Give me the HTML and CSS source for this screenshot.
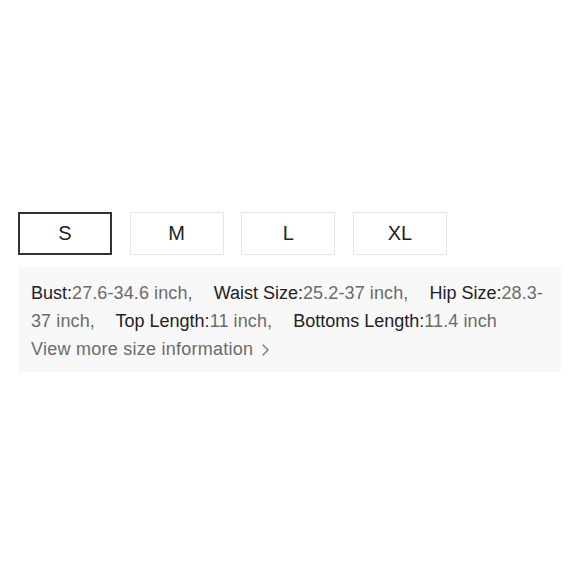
FILE: index.html
```html
<!DOCTYPE html>
<html>
<head>
<meta charset="utf-8">
<link rel="stylesheet" href="styles.css">
</head>
<body>
<div class="page">
  <div class="sizes">
    <div class="size active">S</div>
    <div class="size">M</div>
    <div class="size">L</div>
    <div class="size">XL</div>
  </div>
  <div class="info">
    <p class="specs"><span class="item"><span class="label">Bust:</span><span class="value">27.6-34.6 inch,</span></span> <span class="item"><span class="label">Waist Size:</span><span class="value">25.2-37 inch,</span></span> <span class="item"><span class="label">Hip Size:</span><span class="value">28.3-<wbr>37 inch,</span></span> <span class="item"><span class="label">Top Length:</span><span class="value">11 inch,</span></span> <span class="item"><span class="label">Bottoms Length:</span><span class="value">11.4 inch</span></span></p>
    <div class="more">View more size information <svg class="chev" width="9" height="14" viewBox="0 0 9 14"><path d="M2 2 L7 7 L2 12" fill="none" stroke="#777" stroke-width="1.4" stroke-linecap="round" stroke-linejoin="round"/></svg></div>
  </div>
</div>
</body>
</html>
```

FILE: styles.css
```css
html, body {
  margin: 0;
  padding: 0;
  background: #ffffff;
}
body {
  font-family: "Liberation Sans", Arial, Helvetica, sans-serif;
}
.page {
  padding: 212px 19px 0 18px;
}
.sizes {
  display: flex;
  gap: 17.67px;
}
.size {
  box-sizing: border-box;
  width: 94px;
  height: 43px;
  border: 1px solid #e6e6e6;
  display: flex;
  align-items: center;
  justify-content: center;
  font-size: 20px;
  color: #222;
}
.size.active {
  border: 2px solid #333;
}
.info {
  margin-top: 12px;
  background: #f8f8f8;
  padding: 12px 12px 9px 13px;
  font-size: 18px;
  line-height: 28px;
}
.specs {
  margin: 0;
}
.item {
  margin-right: 16px;
}
.label {
  color: #222;
}
.value {
  color: #6b6b6b;
  letter-spacing: 0.1px;
}
.more {
  color: #6b6b6b;
  display: flex;
  align-items: center;
  gap: 8px;
  letter-spacing: 0.25px;
}
.chev {
  display: block;
  margin-top: 1px;
}
```
